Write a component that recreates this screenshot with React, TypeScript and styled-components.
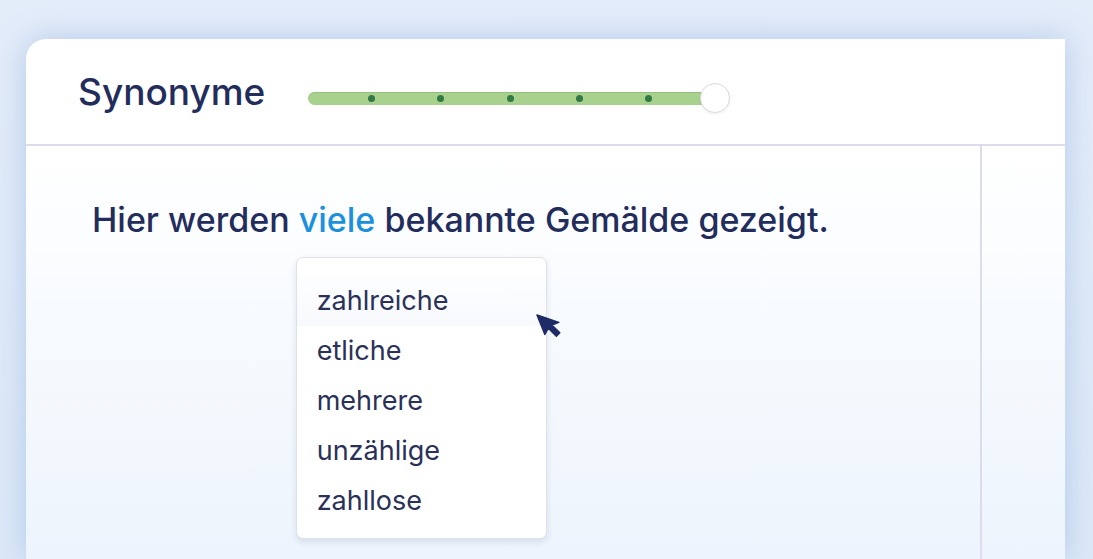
import React from "react";
import styled, { createGlobalStyle } from "styled-components";

const Global = createGlobalStyle`
  html, body { margin: 0; padding: 0; }
  body {
    width: 1093px;
    height: 559px;
    overflow: hidden;
    background: linear-gradient(180deg, #e3ecf9 0%, #dce8f7 100%);
    font-family: Inter, "Noto Sans", sans-serif;
    color: #232d5c;
  }
`;

const Page = styled.div`
  padding: 39px 28px 0 26px;
  height: 559px;
  box-sizing: border-box;
  overflow: hidden;
`;

const Card = styled.div`
  background: #fff;
  border-radius: 20px 0 0 0;
  height: 520px;
  box-shadow: 0 0 30px rgba(115, 155, 215, 0.4);
  display: flex;
  flex-direction: column;
`;

const Header = styled.div`
  height: 105px;
  flex: none;
  border-bottom: 2px solid #dcdcec;
  display: flex;
  align-items: center;
  padding-left: 52px;
`;

const Title = styled.h1`
  margin: 0;
  font-size: 37px;
  font-weight: 500;
  color: #232d5c;
  width: 230px;
`;

const Slider = styled.div`
  position: relative;
  width: 422px;
  height: 32px;
  margin-top: 13px;
  display: flex;
  align-items: center;
`;

const Track = styled.div`
  width: 407px;
  height: 13px;
  border-radius: 7px;
  background: #a9d18e;
  box-shadow: inset 0 1px 0 rgba(110, 160, 90, 0.35);
  display: flex;
  align-items: center;
  padding-left: 60px;
  gap: 62.3px;
  box-sizing: border-box;
`;

const Dot = styled.span`
  width: 7px;
  height: 7px;
  border-radius: 50%;
  background: #2f7a45;
  flex: none;
`;

const Thumb = styled.span`
  position: absolute;
  left: 392px;
  top: 1px;
  width: 28px;
  height: 28px;
  border-radius: 50%;
  background: #fff;
  border: 1.5px solid #d9dbe2;
  box-shadow: 0 1px 3px rgba(0, 0, 0, 0.08);
`;

const Body = styled.div`
  flex: 1;
  display: grid;
  grid-template-columns: 956px 1fr;
  background: linear-gradient(180deg, #ffffff 0%, #f8fbfe 40%, #edf4fd 100%);
`;

const Main = styled.div`
  border-right: 2px solid #dcdcec;
  padding: 54px 0 0 66px;
`;

const Side = styled.div``;

const Sentence = styled.p`
  margin: 0;
  font-size: 34px;
  line-height: 40px;
  font-weight: 500;
  color: #232d5c;
`;

const Word = styled.span`
  position: relative;
  color: #1b90dd;
`;

const Menu = styled.ul`
  position: absolute;
  left: -3px;
  top: 58px;
  width: 251px;
  margin: 0;
  padding: 18px 0 12px;
  list-style: none;
  background: #fff;
  border: 1px solid #dfe1e8;
  border-radius: 7px;
  box-shadow: 0 3px 6px rgba(40, 60, 110, 0.12);
  box-sizing: border-box;
`;

const Item = styled.li<{ $active?: boolean }>`
  height: 50px;
  display: flex;
  align-items: center;
  padding-left: 20px;
  font-size: 27px;
  font-weight: 400;
  color: #2a3158;
  background: ${(p) => (p.$active ? "linear-gradient(180deg, #fdfeff, #f7f9fd)" : "transparent")};
`;

const Cursor = styled.svg`
  position: absolute;
  left: 238px;
  top: 55px;
`;

const items = ["zahlreiche", "etliche", "mehrere", "unzählige", "zahllose"];

export default function App() {
  return (
    <>
      <Global />
      <Page>
        <Card>
          <Header>
            <Title>Synonyme</Title>
            <Slider>
              <Track>
                {[0, 1, 2, 3, 4].map((i) => (
                  <Dot key={i} />
                ))}
              </Track>
              <Thumb />
            </Slider>
          </Header>
          <Body>
            <Main>
              <Sentence>
                Hier werden{" "}
                <Word>
                  viele
                  <Menu>
                    {items.map((t, i) => (
                      <Item key={t} $active={i === 0}>
                        {t}
                      </Item>
                    ))}
                    <Cursor width="26" height="36" viewBox="0 0 26 36">
                      <path
                        d="M2 2 L2 23 L7.5 18.5 L12 29 L16.5 27 L12 17 L19.5 17 Z"
                        fill="#1f2b66"
                        stroke="#1f2b66"
                        strokeWidth="1.5"
                        strokeLinejoin="round"
                        transform="rotate(-22 2 2)"
                      />
                    </Cursor>
                  </Menu>
                </Word>{" "}
                bekannte Gemälde gezeigt.
              </Sentence>
            </Main>
            <Side />
          </Body>
        </Card>
      </Page>
    </>
  );
}
